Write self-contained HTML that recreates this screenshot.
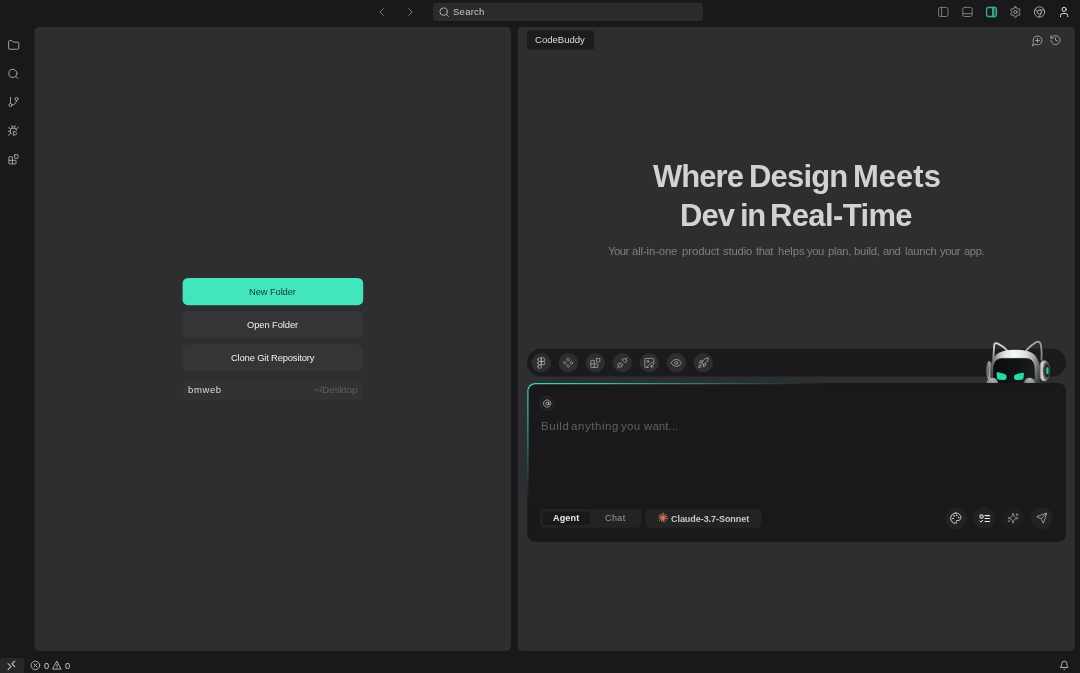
<!DOCTYPE html>
<html>
<head>
<meta charset="utf-8">
<style>
*{box-sizing:border-box;margin:0;padding:0}
html,body{width:1080px;height:673px;overflow:hidden;background:#19181b;font-family:"Liberation Sans",sans-serif;}
body{position:relative;color:#ddd}
svg{position:absolute;overflow:visible}
.ico{fill:none;stroke:#a9aaac;stroke-width:1;stroke-linecap:round;stroke-linejoin:round}
.lu{stroke-width:1.9;stroke:#a4a5a7}
.h1{font-size:31px;font-weight:bold;color:#d2d2d3}
.t{will-change:transform}
.tb{stroke-width:1.55;stroke:#adaeb0}
.st{top:245.7px;font-size:11.3px;color:#7e7f81}
.ph{top:421.3px;font-size:11.5px;color:#606163}
.t{position:absolute;white-space:nowrap;line-height:1}
</style>
</head>
<body>
<svg style="left:0;top:0" width="1080" height="673" viewBox="0 0 1080 673">
<rect x="432.900" y="2.800" width="270.100" height="18.200" rx="4" fill="#2b2b2d"/>
<rect x="34.500" y="26.900" width="476.500" height="624" rx="5" fill="#2d2e30"/>
<rect x="517.600" y="26.900" width="557.300" height="624" rx="5" fill="#2d2e30"/>
<rect x="182.600" y="277.900" width="180.600" height="27.250" rx="5.500" fill="#42e5bc"/>
<rect x="182.600" y="311.050" width="180.600" height="27.300" rx="5.500" fill="#353537"/>
<rect x="182.600" y="344.250" width="180.600" height="27.100" rx="5.500" fill="#353537"/>
<rect x="182.800" y="380.600" width="180" height="19.300" rx="4" fill="#313234"/>
<rect x="527" y="30.600" width="67.100" height="19.250" rx="3" fill="#1c1b1e"/>
<rect x="527.100" y="348.750" width="538.900" height="27.850" rx="13.900" fill="#1b1a1d"/>
<g fill="#2e2e31"><circle cx="541.300" cy="362.750" r="9.700"/><circle cx="568.300" cy="362.750" r="9.700"/><circle cx="595.300" cy="362.750" r="9.700"/><circle cx="622.300" cy="362.750" r="9.700"/><circle cx="649.300" cy="362.750" r="9.700"/><circle cx="676.300" cy="362.750" r="9.700"/><circle cx="703.300" cy="362.750" r="9.700"/></g>
</svg>

<!-- ===== top bar ===== -->
<svg class="ico" style="left:0;top:0" width="1080" height="24" viewBox="0 0 1080 24"><path d="M383.400 8.600 L380.100 12 L383.400 15.400" stroke="#78797b" stroke-width="1"/><path d="M408.800 8.600 L412 12 L408.800 15.400" stroke="#78797b" stroke-width="1"/></svg>
<svg class="ico" style="left:439px;top:7px" width="10" height="10" viewBox="0 0 10 10"><circle cx="4.6" cy="4.6" r="3.7"/><path d="M7.3 7.3 L9.4 9.4"/></svg>
<div class="t" style="left:453.3px;top:7.1px;font-size:9.5px;letter-spacing:0.26px;color:#c9c9cb">Search</div>

<!-- top right icons -->
<svg class="ico" style="left:0;top:0" width="1080" height="24" viewBox="0 0 1080 24" stroke-width="1.150">
<rect x="938.600" y="7.400" width="9.400" height="9.100" rx="1.700" stroke="#7a7b7d"/><path d="M941.600 7.400V16.500" stroke="#7a7b7d"/>
<rect x="962.800" y="7.400" width="9.400" height="9.100" rx="1.700" stroke="#7a7b7d"/><path d="M962.800 13.700H972.200" stroke="#7a7b7d"/>
<rect x="993" y="7.400" width="3.400" height="9.100" fill="#235848" stroke="none"/>
<rect x="986.600" y="7.500" width="9.900" height="9" rx="1.700" stroke="#3fa98b" stroke-width="1.300"/><path d="M993 7.500V16.500" stroke="#3fa98b" stroke-width="1.900"/>
</svg>
<svg class="ico lu" style="left:1009px;top:5px" width="14" height="15" viewBox="-0.387 -1.548 27.097 29.032"><path d="M12.22 2h-.44a2 2 0 0 0-2 2v.18a2 2 0 0 1-1 1.73l-.43.25a2 2 0 0 1-2 0l-.15-.08a2 2 0 0 0-2.73.73l-.22.38a2 2 0 0 0 .73 2.73l.15.1a2 2 0 0 1 1 1.72v.51a2 2 0 0 1-1 1.74l-.15.09a2 2 0 0 0-.73 2.73l.22.38a2 2 0 0 0 2.73.73l.15-.08a2 2 0 0 1 2 0l.43.25a2 2 0 0 1 1 1.73V20a2 2 0 0 0 2 2h.44a2 2 0 0 0 2-2v-.18a2 2 0 0 1 1-1.73l.43-.25a2 2 0 0 1 2 0l.15.08a2 2 0 0 0 2.73-.73l.22-.39a2 2 0 0 0-.73-2.73l-.15-.08a2 2 0 0 1-1-1.74v-.5a2 2 0 0 1 1-1.74l.15-.09a2 2 0 0 0 .73-2.73l-.22-.38a2 2 0 0 0-2.73-.73l-.15.08a2 2 0 0 1-2 0l-.43-.25a2 2 0 0 1-1-1.73V4a2 2 0 0 0-2-2z"/><circle cx="12" cy="12" r="3"/></svg>
<svg class="ico lu" style="left:1033px;top:5px" width="14" height="15" viewBox="-0.581 -1.548 27.097 29.032"><circle cx="12" cy="12" r="10"/><circle cx="12" cy="12" r="4"/><path d="M21.17 8H12M3.95 6.06 8.54 14M10.88 21.94 15.46 14"/></svg>
<svg class="ico lu" style="left:1057px;top:5px" width="15" height="15" viewBox="-1.742 -1.548 29.032 29.032" stroke="#e6e6e8"><path d="M19 21v-2a4 4 0 0 0-4-4H9a4 4 0 0 0-4 4v2" stroke="#e6e6e8"/><circle cx="12" cy="7" r="4" stroke="#e6e6e8"/></svg>

<!-- ===== activity bar ===== -->
<svg class="ico lu" style="left:7px;top:39px" width="14" height="14" viewBox="-1.18 -0.197 27.541 27.541"><path d="M20 20a2 2 0 0 0 2-2V8a2 2 0 0 0-2-2h-7.9a2 2 0 0 1-1.69-.9L9.6 3.9A2 2 0 0 0 7.93 3H4a2 2 0 0 0-2 2v13a2 2 0 0 0 2 2Z"/></svg>
<svg class="ico lu" style="left:7px;top:67px" width="14" height="14" viewBox="-0.59 -1.574 27.541 27.541"><circle cx="11" cy="11" r="8"/><path d="m21 21-4.3-4.3"/></svg>
<svg class="ico lu" style="left:7px;top:95px" width="14" height="15" viewBox="-0.787 -1.77 27.541 29.508"><path d="M6 3v12"/><circle cx="18" cy="6" r="3"/><circle cx="6" cy="18" r="3"/><path d="M18 9a9 9 0 0 1-9 9"/></svg>
<svg class="ico lu" style="left:7px;top:124px" width="14" height="14" viewBox="-0.59 -1.377 27.541 27.541"><path d="M12.765 21.522a.5.5 0 0 1-.765-.424v-8.196a.5.5 0 0 1 .765-.424l5.878 3.674a1 1 0 0 1 0 1.696z"/><path d="M14.12 3.88 16 2"/><path d="M18 11a4 4 0 0 0-4-4h-4a4 4 0 0 0-4 4v3a6.1 6.1 0 0 0 2 4.5"/><path d="M20.97 5c0 2.1-1.6 3.8-3.5 4"/><path d="M3 21c0-2.1 1.7-3.9 3.8-4"/><path d="M6 13H2"/><path d="M6.53 9C4.6 8.8 3 7.1 3 5"/><path d="m8 2 1.880 1.880"/><path d="M9 7.130v-1a3.003 3.003 0 1 1 6 0v1"/></svg>
<svg class="ico lu" style="left:7px;top:153px" width="14" height="14" viewBox="-0.787 -0.393 27.541 27.541"><rect width="7" height="7" x="14" y="3" rx="1"/><path d="M10 21V8a1 1 0 0 0-1-1H4a1 1 0 0 0-1 1v12a1 1 0 0 0 1 1h12a1 1 0 0 0 1-1v-5a1 1 0 0 0-1-1H3"/></svg>

<!-- ===== left panel ===== -->
<div class="t" style="left:249.3px;top:287px;font-size:9.4px;letter-spacing:-0.11px;color:#18382f">New Folder</div>
<div class="t" style="left:247.4px;top:319.9px;font-size:9.4px;letter-spacing:-0.09px;color:#f0f0f2">Open Folder</div>
<div class="t" style="left:230.9px;top:353px;font-size:9.4px;letter-spacing:-0.16px;color:#f0f0f2">Clone Git Repository</div>
<div class="t" style="left:188.3px;top:385.2px;font-size:9.5px;letter-spacing:0.61px;color:#dcdcde">bmweb</div>
<div class="t" style="left:314.2px;top:385.2px;font-size:9.5px;letter-spacing:0.04px;color:#5f6062">~/Desktop</div>

<!-- ===== right panel ===== -->
<div class="t" style="left:535.2px;top:35.1px;font-size:9.5px;letter-spacing:0.02px;color:#dededf">CodeBuddy</div>

<svg class="ico lu" style="left:1031px;top:34px;stroke-width:1.8" width="14" height="14" viewBox="-1 -1 28 28" ><path d="M7.9 20A9 9 0 1 0 4 16.100L2 22Z"/><path d="M8 12h8"/><path d="M12 8v8"/></svg>
<svg class="ico lu" style="left:1049px;top:34px;stroke-width:1.8" width="14" height="14" viewBox="-1 -0.2 28 28"><path d="M3 12a9 9 0 1 0 9-9 9.750 9.750 0 0 0-6.740 2.740L3 8"/><path d="M3 3v5h5"/><path d="M12 7v5l4 2"/></svg>

<div class="t h1" style="left:652.9px;top:161px;letter-spacing:-0.95px">Where</div>
<div class="t h1" style="left:749.4px;top:161px;letter-spacing:-0.82px">Design</div>
<div class="t h1" style="left:852.9px;top:161px;letter-spacing:0.02px">Meets</div>
<div class="t h1" style="left:679.9px;top:200.3px;letter-spacing:-0.92px">Dev</div>
<div class="t h1" style="left:739.8px;top:200.3px;letter-spacing:-1.46px">in</div>
<div class="t h1" style="left:770.2px;top:200.3px;letter-spacing:-0.63px">Real-Time</div>
<div class="t st" style="left:607.5px;letter-spacing:-0.5px">Your</div>
<div class="t st" style="left:632.3px;letter-spacing:-0.12px">all-in-one</div>
<div class="t st" style="left:682.0px;letter-spacing:-0.05px">product</div>
<div class="t st" style="left:723.4px;letter-spacing:-0.18px">studio</div>
<div class="t st" style="left:756.3px;letter-spacing:-0.5px">that</div>
<div class="t st" style="left:777.8px;letter-spacing:-0.11px">helps</div>
<div class="t st" style="left:807.3px;letter-spacing:-0.5px">you</div>
<div class="t st" style="left:827.7px;letter-spacing:-0.26px">plan,</div>
<div class="t st" style="left:854.2px;letter-spacing:-0.22px">build,</div>
<div class="t st" style="left:883.1px;letter-spacing:-0.5px">and</div>
<div class="t st" style="left:904.7px;letter-spacing:-0.28px">launch</div>
<div class="t st" style="left:940.1px;letter-spacing:-0.49px">your</div>
<div class="t st" style="left:964.4px;letter-spacing:-0.43px">app.</div>

<!-- toolbar pill -->
<svg class="ico lu tb" style="left:535px;top:356px" width="14" height="14" viewBox="-0.6 -1.8 28 28"><path d="M5 5.5A3.5 3.5 0 0 1 8.500 2H12v7H8.500A3.500 3.500 0 0 1 5 5.500z"/><path d="M12 2h3.500a3.500 3.500 0 1 1 0 7H12V2z"/><path d="M12 12.500a3.500 3.500 0 1 1 7 0 3.500 3.500 0 1 1-7 0z"/><path d="M5 19.500A3.500 3.500 0 0 1 8.500 16H12v3.500a3.500 3.500 0 1 1-7 0z"/><path d="M5 12.500A3.500 3.500 0 0 1 8.500 9H12v7H8.500A3.500 3.500 0 0 1 5 12.500z"/></svg>
<svg class="ico lu tb" style="left:562px;top:356px" width="14" height="14" viewBox="-0.6 -1.8 28 28"><path d="M12 2.500 L14.900 5.400 L12 8.300 L9.100 5.400Z"/><path d="M12 15.700 L14.900 18.600 L12 21.500 L9.100 18.600Z"/><path d="M5.400 9.100 L8.300 12 L5.400 14.900 L2.500 12Z"/><path d="M18.600 9.100 L21.500 12 L18.600 14.900 L15.700 12Z"/></svg>
<svg class="ico lu tb" style="left:589px;top:356px" width="14" height="14" viewBox="-0.6 -1.8 28 28"><rect width="7" height="7" x="14" y="3" rx="1"/><path d="M10 21V8a1 1 0 0 0-1-1H4a1 1 0 0 0-1 1v12a1 1 0 0 0 1 1h12a1 1 0 0 0 1-1v-5a1 1 0 0 0-1-1H3"/></svg>
<svg class="ico lu tb" style="left:616px;top:356px" width="14" height="14" viewBox="-0.6 -1.8 28 28"><path d="m19 5 3-3"/><path d="m2 22 3-3"/><path d="M6.300 20.300a2.400 2.400 0 0 0 3.400 0L12 18l-6-6-2.300 2.300a2.400 2.400 0 0 0 0 3.400Z"/><path d="M7.500 13.500 10 11"/><path d="M10.500 16.500 13 14"/><path d="m12 6 6 6 2.300-2.300a2.400 2.400 0 0 0 0-3.400l-2.600-2.600a2.400 2.400 0 0 0-3.400 0Z"/></svg>
<svg class="ico lu tb" style="left:643px;top:356px" width="14" height="14" viewBox="-0.6 -1.8 28 28"><path d="M10.300 21H5a2 2 0 0 1-2-2V5a2 2 0 0 1 2-2h14a2 2 0 0 1 2 2v10l-3.100-3.100a2 2 0 0 0-2.814.014L6 21"/><path d="m14 19.500 3-3 3 3"/><path d="M17 22v-5.500"/><circle cx="9" cy="9" r="2"/></svg>
<svg class="ico lu tb" style="left:670px;top:356px" width="14" height="14" viewBox="-0.6 -1.8 28 28"><path d="M2.062 12.348a1 1 0 0 1 0-.696 10.750 10.750 0 0 1 19.876 0 1 1 0 0 1 0 .696 10.750 10.750 0 0 1-19.876 0"/><circle cx="12" cy="12" r="3"/></svg>
<svg class="ico lu tb" style="left:697px;top:356px" width="14" height="14" viewBox="-0.6 -1.8 28 28"><path d="M4.500 16.500c-1.500 1.260-2 5-2 5s3.740-.5 5-2c.710-.840.700-2.130-.090-2.910a2.180 2.180 0 0 0-2.910-.090z"/><path d="m12 15-3-3a22 22 0 0 1 2-3.950A12.880 12.880 0 0 1 22 2c0 2.720-.780 7.500-6 11a22.350 22.350 0 0 1-4 2z"/><path d="M9 12H4s.550-3.030 2-4c1.620-1.080 5 0 5 0"/><path d="M12 15v5s3.030-.550 4-2c1.080-1.620 0-5 0-5"/></svg>

<!-- robot cat -->
<svg style="left:980px;top:335px" width="81" height="50" viewBox="0 0 81 50">
<defs>
<clipPath id="rc"><rect x="0" y="0" width="80" height="48.200"/></clipPath>
<radialGradient id="hd" cx="0.48" cy="0.12" r="0.75"><stop offset="0" stop-color="#fafafa"/><stop offset="0.35" stop-color="#dcdcdc"/><stop offset="0.7" stop-color="#a2a2a2"/><stop offset="1" stop-color="#5e5e5e"/></radialGradient>
<linearGradient id="hs" x1="0" y1="0" x2="1" y2="0"><stop offset="0" stop-color="#000" stop-opacity=".5"/><stop offset="0.16" stop-color="#000" stop-opacity=".12"/><stop offset="0.3" stop-color="#000" stop-opacity="0"/><stop offset="0.72" stop-color="#000" stop-opacity="0"/><stop offset="0.88" stop-color="#000" stop-opacity=".12"/><stop offset="1" stop-color="#000" stop-opacity=".42"/></linearGradient>
<linearGradient id="vs" x1="0" y1="0" x2="1" y2="0.3"><stop offset="0" stop-color="#0a0c0c"/><stop offset="0.6" stop-color="#0f1413"/><stop offset="1" stop-color="#18201e"/></linearGradient>
<linearGradient id="ear" x1="0" y1="0" x2="0" y2="1"><stop offset="0" stop-color="#d8d8d8"/><stop offset="1" stop-color="#8a8a8a"/></linearGradient>
<linearGradient id="ear2" x1="0" y1="0" x2="1" y2="1"><stop offset="0" stop-color="#bdbdbd"/><stop offset="1" stop-color="#7d7d7d"/></linearGradient>
<linearGradient id="hp" x1="0" y1="0" x2="1" y2="0"><stop offset="0" stop-color="#3c3c3c"/><stop offset="0.28" stop-color="#dedede"/><stop offset="0.6" stop-color="#868686"/><stop offset="1" stop-color="#2e2e2e"/></linearGradient>
<linearGradient id="hpl" x1="0" y1="0" x2="1" y2="0"><stop offset="0" stop-color="#5a5a5a"/><stop offset="0.45" stop-color="#b4b4b4"/><stop offset="1" stop-color="#484848"/></linearGradient>
<radialGradient id="paw" cx="0.5" cy="0.2" r="0.9"><stop offset="0" stop-color="#b4b4b4"/><stop offset="1" stop-color="#5c5c5c"/></radialGradient>
</defs>
<g clip-path="url(#rc)">
<!-- ears -->
<path d="M13.300 24.500 L14.200 10.400 Q14.500 7.300 17.300 8.400 Q22.500 10.800 27.400 15.600" fill="none" stroke="url(#ear)" stroke-width="1.900" stroke-linejoin="round" stroke-linecap="round"/>
<path d="M46 15.600 Q51 10 56.400 7 Q59.800 5.400 60.900 10 Q62.200 17 61.500 25" fill="none" stroke="url(#ear2)" stroke-width="1.800" stroke-linejoin="round" stroke-linecap="round"/>
<!-- left headphone -->
<ellipse cx="9.200" cy="35.400" rx="3.100" ry="9.400" fill="url(#hpl)"/>
<ellipse cx="8.200" cy="35.400" rx="0.900" ry="7.400" fill="#4c4c4c" opacity=".6"/>
<!-- right headphone -->
<ellipse cx="63.300" cy="35.750" rx="6" ry="10.800" fill="#2e2e2e"/>
<ellipse cx="64.500" cy="35.750" rx="5.900" ry="10.500" fill="url(#hp)"/>
<ellipse cx="66.300" cy="35.800" rx="3.500" ry="8.300" fill="#585858"/>
<ellipse cx="66.900" cy="35.800" rx="2.500" ry="6.700" fill="#2a2a2a"/>
<ellipse cx="67.400" cy="35.700" rx="1.200" ry="3.400" fill="#1fd47a"/>
<!-- head -->
<path d="M10.600 60 L10.600 36 C10.600 26 14 19.400 22 16.500 C27 14.900 31 14.700 35.200 14.700 C40 14.700 44 14.900 49 16.500 C56.500 19.400 59.800 26 59.800 36 L59.800 60 Z" fill="url(#hd)"/>
<path d="M10.600 60 L10.600 36 C10.600 26 14 19.400 22 16.500 C27 14.900 31 14.700 35.200 14.700 C40 14.700 44 14.900 49 16.500 C56.500 19.400 59.800 26 59.800 36 L59.800 60 Z" fill="url(#hs)"/>
<!-- visor -->
<path d="M13.500 60 L13.500 35 C13.500 27 16 23.400 23 23.400 L45 23.400 C52 23.400 54.300 27 54.300 35 L54.300 60 Z" fill="url(#vs)" stroke="#050606" stroke-width=".6"/>
<!-- eyes -->
<path d="M16.600 38.600 Q16.300 36.800 18.300 37.300 L24.600 39 Q26.800 39.600 26.600 41.600 L26.400 43.200 Q26.100 45 24 44.900 L19.200 44.700 Q17.100 44.600 16.900 42.600 Z" fill="#27dba8"/>
<path d="M43.900 39 Q44.200 37.300 42.200 37.800 L35.900 39.400 Q33.700 40 33.900 42 L34.100 43.300 Q34.400 45.100 36.500 45 L41.300 44.800 Q43.400 44.700 43.600 42.700 Z" fill="#27dba8"/>
<!-- paws -->
<ellipse cx="12.300" cy="47.600" rx="5.700" ry="4.800" fill="url(#paw)"/>
<ellipse cx="49.600" cy="47.600" rx="5.400" ry="4.800" fill="url(#paw)"/>
</g>
</svg>

<!-- input box -->
<svg style="left:0;top:0" width="1080" height="673" viewBox="0 0 1080 673">
<defs><radialGradient id="ib" gradientUnits="userSpaceOnUse" cx="0" cy="0" r="1" gradientTransform="translate(527.300 383) scale(300 118)"><stop offset="0" stop-color="#41d6ae"/><stop offset="0.25" stop-color="#3bbf9c"/><stop offset="0.6" stop-color="#2c7565"/><stop offset="1" stop-color="#19181b"/></radialGradient></defs>
<rect x="527.300" y="383" width="538.700" height="158.700" rx="8" fill="url(#ib)"/>
<rect x="528.500" y="384.200" width="537.500" height="157.500" rx="7" fill="#19181b"/>
<circle cx="547.200" cy="403.450" r="6.800" fill="#1c1b1e" stroke="#303033" stroke-width="0.900"/>
<rect x="539.800" y="508.700" width="102" height="19.100" rx="5" fill="#232326"/>
<rect x="543.100" y="511.700" width="46.700" height="13.300" rx="3" fill="#19181b"/>
<rect x="645" y="508.700" width="116.800" height="19.150" rx="5" fill="#232326"/>
<g fill="#222225"><circle cx="956" cy="518.200" r="11"/><circle cx="984.300" cy="518.200" r="11"/><circle cx="1013" cy="518.200" r="11" fill="#1e1d20"/><circle cx="1041.700" cy="518.200" r="11"/></g>
<path d="M0 673 V659.900 a2 2 0 0 1 2 -2 H24 V673 Z" fill="#272729"/>
</svg>

<svg class="ico" style="left:542px;top:399px;stroke:#e2e2e4;stroke-width:1.750" width="11" height="10" viewBox="-2.182 -0.545 30 27.273"><circle cx="12" cy="12" r="4"/><path d="M16 8v5a3 3 0 0 0 6 0v-1a10 10 0 1 0-4 8"/></svg>
<div class="t ph" style="left:540.7px;letter-spacing:0.58px">Build</div>
<div class="t ph" style="left:571.4px;letter-spacing:0.57px">anything</div>
<div class="t ph" style="left:621.4px;letter-spacing:0.31px">you</div>
<div class="t ph" style="left:644.0px;letter-spacing:0.08px">want...</div>

<!-- agent/chat -->
<div class="t" style="left:552.7px;top:514.2px;font-size:9px;letter-spacing:0.16px;font-weight:bold;color:#ececee">Agent</div>
<div class="t" style="left:605.2px;top:514.3px;font-size:9px;letter-spacing:0.43px;color:#97989a">Chat</div>
<svg style="left:658px;top:512px" width="11" height="12" viewBox="-10 -11.4 22 24"><g stroke="#d97757" stroke-width="2" stroke-linecap="round"><path d="M1.47 0.30 L9.02 1.83"/><path d="M1.08 1.05 L5.88 5.72"/><path d="M0.34 1.46 L2.08 8.96"/><path d="M-0.50 1.41 L-2.76 7.72"/><path d="M-1.19 0.92 L-7.29 5.62"/><path d="M-1.49 0.13 L-8.17 0.70"/><path d="M-1.33 -0.70 L-8.14 -4.29"/><path d="M-0.74 -1.31 L-4.03 -7.14"/><path d="M0.09 -1.50 L0.53 -9.18"/><path d="M0.88 -1.21 L4.82 -6.63"/><path d="M1.40 -0.54 L8.57 -3.34"/></g><circle r="2.6" fill="#d97757"/></svg>
<div class="t" style="left:671.1px;top:514.6px;font-size:9px;letter-spacing:-0.05px;font-weight:bold;color:#c8c8ca">Claude-3.7-Sonnet</div>

<!-- right circles -->
<svg class="ico lu" style="left:949px;top:512px;stroke:#dcdcde;stroke-width:1.800" width="15" height="14" viewBox="-1.161 0 29.032 27.097"><circle cx="13.5" cy="6.500" r=".55" fill="#dcdcde"/><circle cx="17.500" cy="10.500" r=".55" fill="#dcdcde"/><circle cx="8.500" cy="7.500" r=".55" fill="#dcdcde"/><circle cx="6.500" cy="12.500" r=".55" fill="#dcdcde"/><path d="M12 2C6.500 2 2 6.500 2 12s4.500 10 10 10c.926 0 1.648-.746 1.648-1.688 0-.437-.180-.835-.437-1.125-.290-.289-.438-.652-.438-1.125a1.640 1.640 0 0 1 1.668-1.668h1.996c3.051 0 5.555-2.503 5.555-5.554C21.965 6.012 17.461 2 12 2z"/></svg>
<svg class="ico" style="left:972px;top:506px" width="26" height="24" viewBox="972 506 26 24" stroke="#ececee"><circle cx="981.500" cy="516.400" r="1.650" stroke="#d8d8da" stroke-width="1.250"/><path d="M985 515.600H989.600M985 518.550H989.600M985 521.500H989.600" stroke="#ececee" stroke-width="1.050"/><path d="M979.800 521.100 L980.900 522.100 L982.700 520.300" stroke="#ececee" stroke-width="1"/></svg>
<svg class="ico lu" style="left:1007px;top:512px;stroke:#8b8c8e" width="13" height="14" viewBox="0 -0.4 26 28"><path d="M9.937 15.500A2 2 0 0 0 8.500 14.063l-6.135-1.582a.5.5 0 0 1 0-.962L8.500 9.936A2 2 0 0 0 9.937 8.500l1.582-6.135a.5.5 0 0 1 .963 0L14.063 8.500A2 2 0 0 0 15.500 9.937l6.135 1.581a.5.5 0 0 1 0 .964L15.500 14.063a2 2 0 0 0-1.437 1.437l-1.582 6.135a.5.5 0 0 1-.963 0z"/><path d="M20 3v4"/><path d="M22 5h-4"/><path d="M4 17v2"/><path d="M5 18H3"/></svg>
<svg class="ico lu" style="left:1035px;top:512px;stroke:#9b9c9e" width="14" height="14" viewBox="-1.4 -0.4 28 28"><path d="M14.536 21.686a.5.5 0 0 0 .937-.024l6.500-19a.496.496 0 0 0-.635-.635l-19 6.500a.5.5 0 0 0-.024.937l7.930 3.180a2 2 0 0 1 1.112 1.110z"/><path d="m21.854 2.147-10.940 10.939"/></svg>

<!-- ===== status bar ===== -->
<svg class="ico" style="left:0;top:657px;stroke:#cacacc;stroke-width:1.05" width="24" height="16" viewBox="0 0 24 16"><path d="M8 6.500 L11 9.500 L8.100 12.700"/><path d="M14.700 4.200 L11.900 6.850 L14.700 9.600"/></svg>
<svg class="ico" style="left:30px;top:660px;stroke:#c4c4c6;stroke-width:0.85" width="12" height="12" viewBox="-0.4 -0.4 12 12"><circle cx="5" cy="5" r="4.300"/><path d="M3.400 3.400 L6.600 6.600 M6.600 3.400 L3.400 6.600"/></svg>
<div class="t" style="left:43.5px;top:661.6px;font-size:9.2px;color:#d0d0d2">0</div>
<svg class="ico" style="left:52px;top:660px;stroke:#c4c4c6;stroke-width:0.85" width="11" height="12" viewBox="0 -0.4 11 12"><path d="M5 1.100 L9.100 8.700 H0.900 Z"/><path d="M5 3.700 V6 M5 7.300 V7.500"/></svg>
<div class="t" style="left:65px;top:661.6px;font-size:9.2px;color:#d0d0d2">0</div>
<svg class="ico lu" style="left:1059px;top:660px;stroke:#d0d0d2;stroke-width:2" width="12" height="12" viewBox="-0.471 -0.706 28.235 28.235"><path d="M10.268 21a2 2 0 0 0 3.464 0"/><path d="M3.262 15.326A1 1 0 0 0 4 17h16a1 1 0 0 0 .740-1.673C19.410 13.956 18 12.499 18 8A6 6 0 0 0 6 8c0 4.499-1.411 5.956-2.738 7.326"/></svg>

</body>
</html>
